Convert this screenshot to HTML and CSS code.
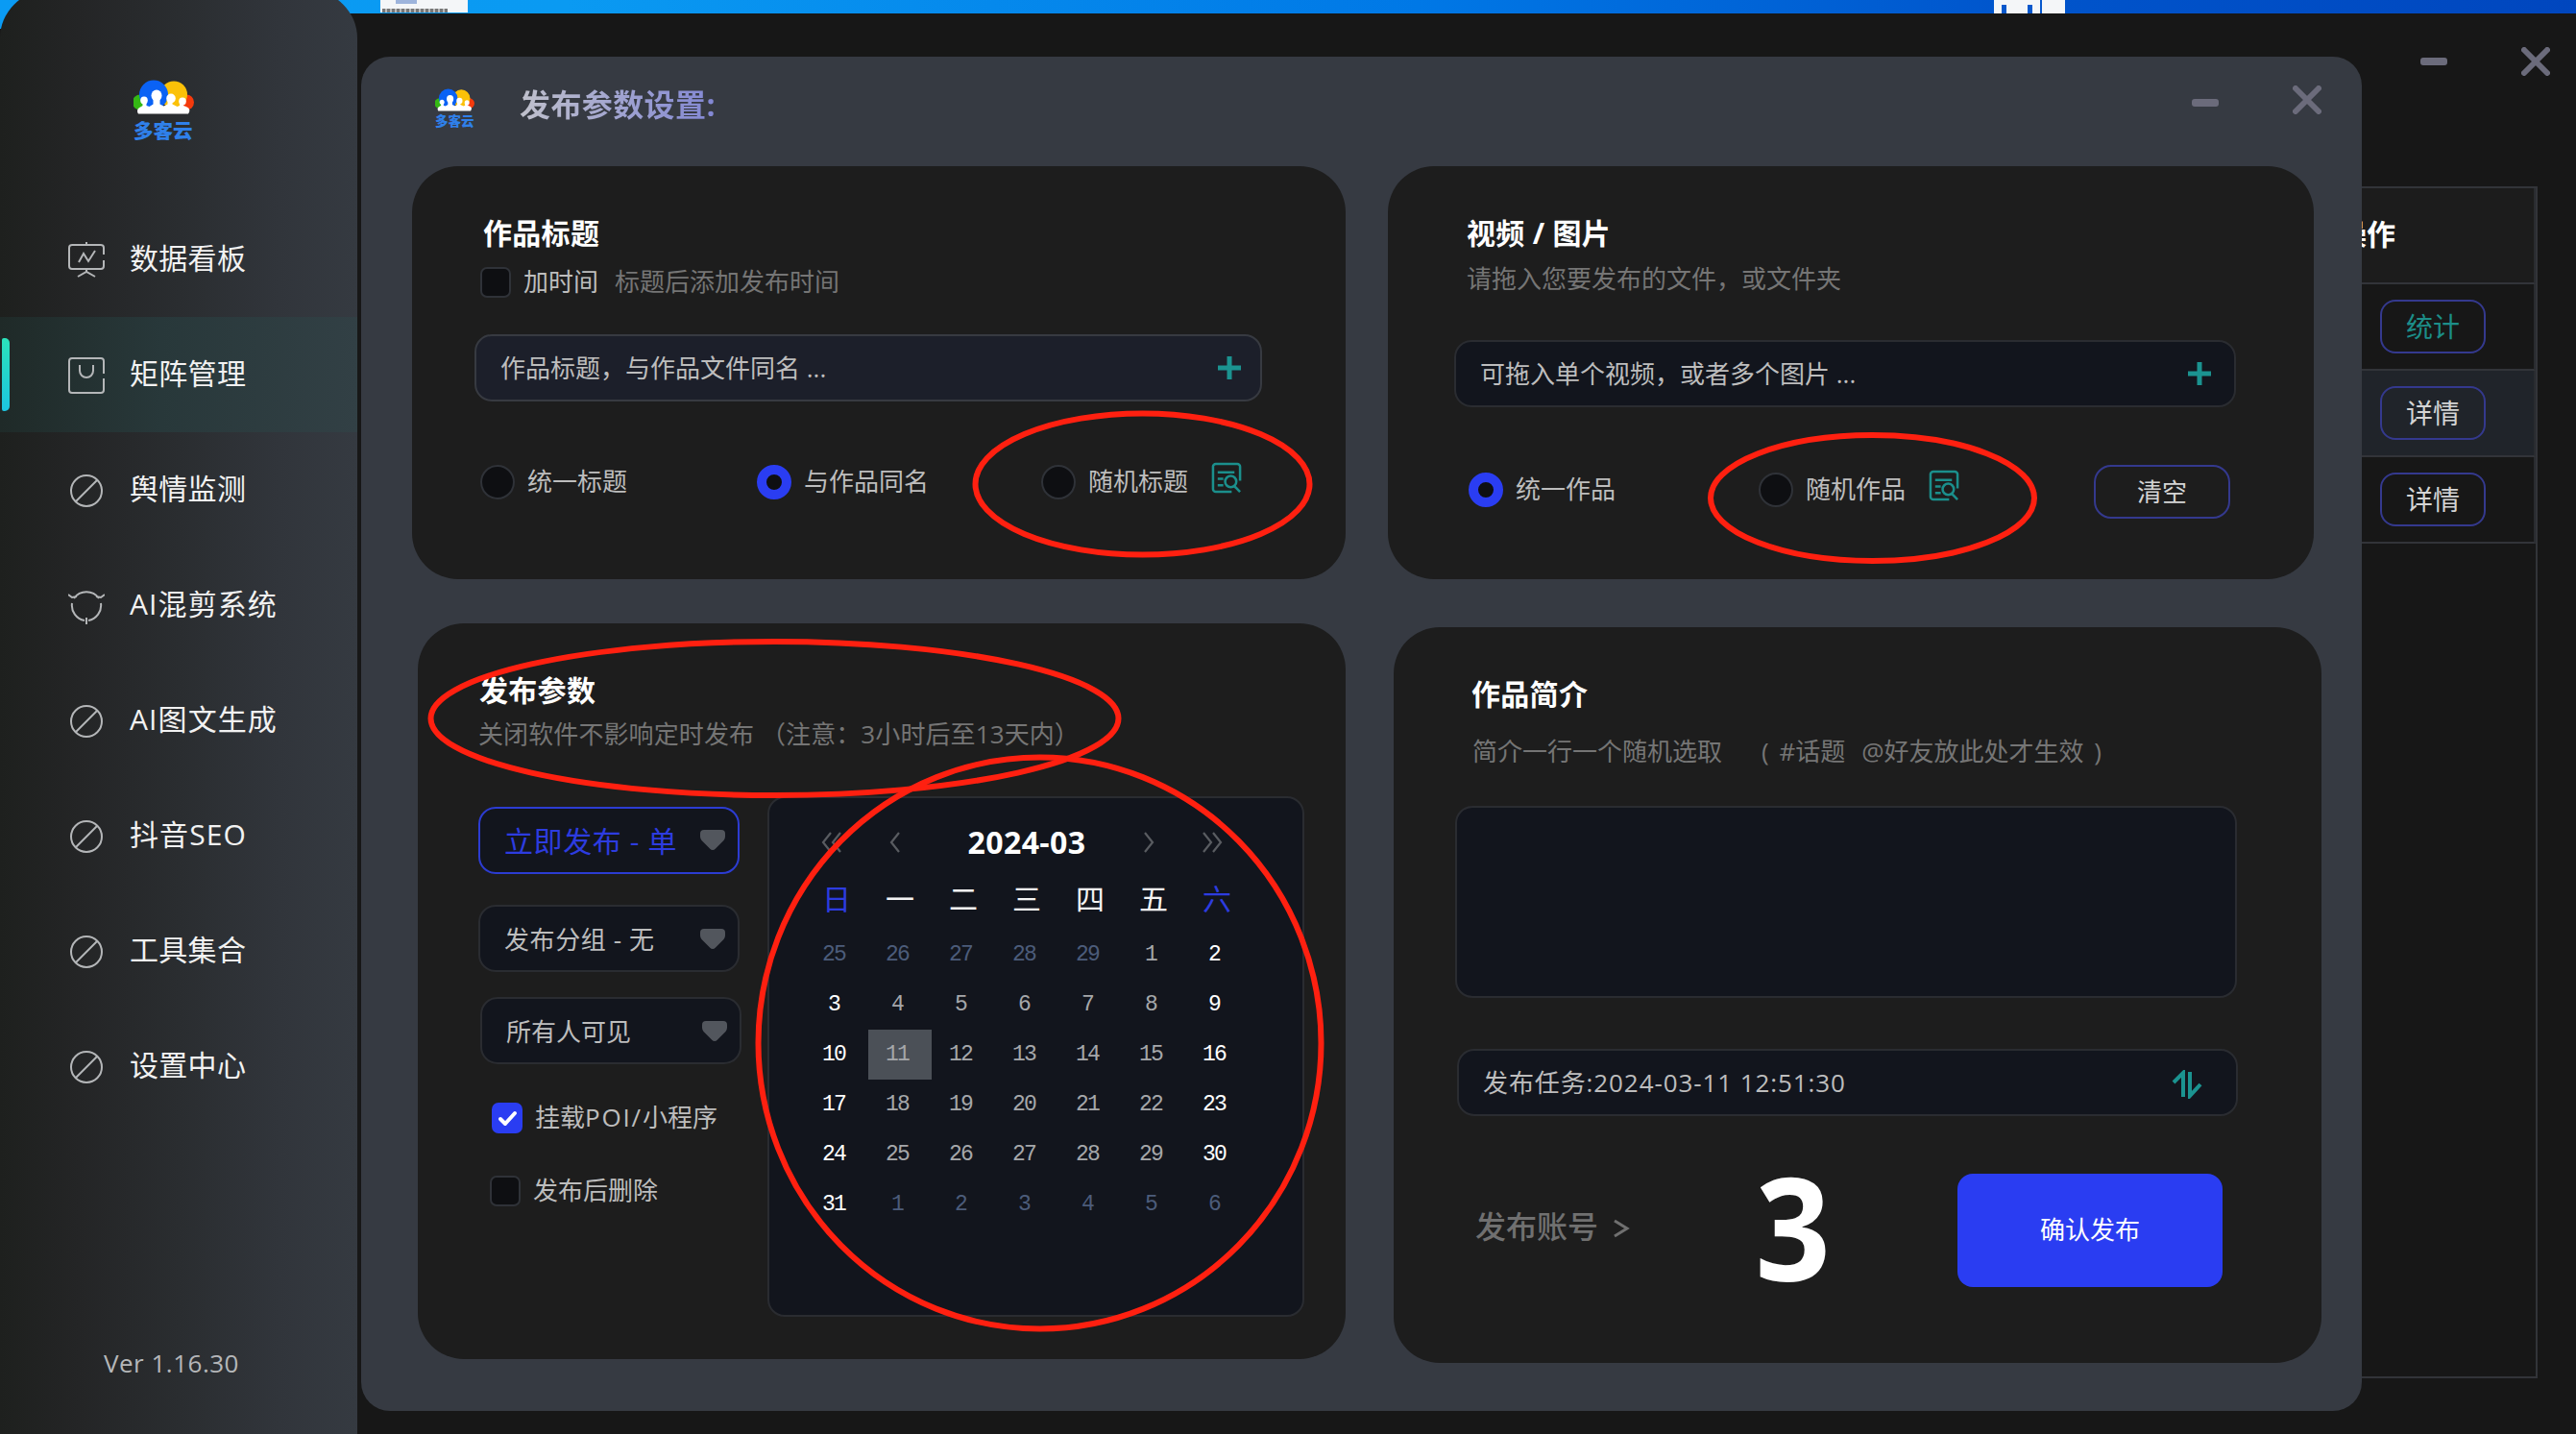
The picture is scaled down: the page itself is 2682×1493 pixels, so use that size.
FILE: index.html
```html
<!DOCTYPE html>
<html lang="zh-CN">
<head>
<meta charset="utf-8">
<title>多客云</title>
<link rel="stylesheet" href="styles.css">
</head>
<body>
<svg width="0" height="0" class="defs" aria-hidden="true">
  <symbol id="people" viewBox="0 0 63 35">
    <circle cx="7" cy="23" r="8" fill="#34b814"/>
    <circle cx="55" cy="23" r="8" fill="#f53a0c"/>
    <circle cx="42" cy="15" r="14" fill="#fbc108"/>
    <circle cx="21" cy="15" r="15" fill="#0a62f5"/>
    <g fill="#fff">
      <ellipse cx="11" cy="21" rx="3.800" ry="4"/><ellipse cx="24" cy="16" rx="5.500" ry="6"/><ellipse cx="39" cy="19" rx="4.800" ry="5"/><ellipse cx="51" cy="22" rx="3.800" ry="4"/>
      <path d="M5 35c-2-3-1-6 3-7.500l1.500-1v-4h4v4l3 1 4-2.500v-7h7v7l4 2 4-2v-5h5v5l5 2.500 2.500-1v-4h4v4c6 1.500 8 4.500 5 8.500z"/>
    </g>
  </symbol>
  <symbol id="ban" viewBox="0 0 38 38"><circle cx="19" cy="19" r="16"/><path d="M8 30L30 8"/></symbol>
  <symbol id="doc" viewBox="0 0 34 34">
    <path d="M31 20V5a3 3 0 0 0-3-3H5a3 3 0 0 0-3 3v24a3 3 0 0 0 3 3h17"/>
    <path d="M7 11h18M7 18h6M7 25h6"/><circle cx="21" cy="21" r="6"/><path d="M25 26l6 6"/>
  </symbol>
  <symbol id="plus" viewBox="0 0 26 26"><path d="M13 1v24M1 13h24"/></symbol>
  <symbol id="close" viewBox="0 0 30 30"><path d="M3 3l24 24M27 3L3 27"/></symbol>
  <symbol id="drop" viewBox="0 0 26 21"><path d="M4 0h18q4 0 4 4v3q0 2-1.500 4L16 19.500q-3 3-6 0L1.500 11Q0 9 0 7V4q0-4 4-4z"/></symbol>
</svg>

<div class="app">
  <span class="peek peek-a"><b></b><i></i></span>
  <span class="peek peek-b"><i></i><i></i><i></i></span>

  <aside class="sidebar">
    <div class="brand"><svg class="brand-art"><use href="#people"/></svg><span>多客云</span></div>
    <nav class="nav">
      <a class="nav-item"><svg class="ico" viewBox="0 0 38 38"><path d="M19 0v3M37 13V6a3 3 0 0 0-3-3H4a3 3 0 0 0-3 3v19a3 3 0 0 0 3 3h30a3 3 0 0 0 3-3v-6M11 21l5-9 5 8 7-11M19 28v3M10 36l9-5 9 5"/></svg>数据看板</a>
      <a class="nav-item active"><svg class="ico" viewBox="0 0 38 38"><path d="M37 17V4a3 3 0 0 0-3-3H4a3 3 0 0 0-3 3v30a3 3 0 0 0 3 3h30a3 3 0 0 0 3-3V22M12 8v6a7 7 0 0 0 14 0V8"/></svg>矩阵管理</a>
      <a class="nav-item"><svg class="ico"><use href="#ban"/></svg>舆情监测</a>
      <a class="nav-item latin"><svg class="ico" viewBox="0 0 38 38"><path d="M6 11a16 16 0 0 1 26 0M34 16a16 16 0 0 1-13 18M17 34A16 16 0 0 1 4 16M0 7l4 3 5-1M38 7l-4 3-5-1M19 31v7"/></svg>AI混剪系统</a>
      <a class="nav-item latin"><svg class="ico"><use href="#ban"/></svg>AI图文生成</a>
      <a class="nav-item latin"><svg class="ico"><use href="#ban"/></svg>抖音SEO</a>
      <a class="nav-item"><svg class="ico"><use href="#ban"/></svg>工具集合</a>
      <a class="nav-item"><svg class="ico"><use href="#ban"/></svg>设置中心</a>
    </nav>
    <div class="version">Ver 1.16.30</div>
  </aside>

  <main class="main">
    <div class="win-controls"><i class="min"></i><svg class="close"><use href="#close"/></svg></div>
    <div class="table">
      <div class="tr th"><span>操作</span></div>
      <div class="tr"><button class="pill teal">统计</button></div>
      <div class="tr hover"><button class="pill">详情</button></div>
      <div class="tr"><button class="pill">详情</button></div>
    </div>
  </main>

  <section class="dialog">
    <header class="dialog-head">
      <div class="brand small"><svg class="brand-art"><use href="#people"/></svg><span>多客云</span></div>
      <h1>发布参数设置:</h1>
      <div class="dialog-controls"><i class="min"></i><svg class="close"><use href="#close"/></svg></div>
    </header>
    <div class="columns">
      <div class="col">
        <article class="card card-title">
          <h2>作品标题</h2>
          <div class="check-row"><i class="box"></i><span>加时间</span><span class="muted">标题后添加发布时间</span></div>
          <div class="field lit"><span>作品标题，与作品文件同名 ...</span><svg class="plus"><use href="#plus"/></svg></div>
          <div class="radios">
            <label class="r1"><i class="radio"></i><span>统一标题</span></label>
            <label class="r2"><i class="radio on"></i><span>与作品同名</span></label>
            <label class="r3"><i class="radio"></i><span>随机标题</span><svg class="doc"><use href="#doc"/></svg></label>
          </div>
        </article>
        <article class="card card-params">
          <h2>发布参数</h2>
          <p class="muted">关闭软件不影响定时发布 （注意：3小时后至13天内）</p>
          <div class="params">
            <div class="options">
              <div class="select primary">立即发布 - 单<svg class="drop"><use href="#drop"/></svg></div>
              <div class="select group">发布分组 - 无<svg class="drop"><use href="#drop"/></svg></div>
              <div class="select who">所有人可见<svg class="drop"><use href="#drop"/></svg></div>
              <div class="opt poi"><i class="box on"><svg viewBox="0 0 32 32"><path d="M9 17l5 5 10-11"/></svg></i><span>挂载<em>POI/</em>小程序</span></div>
              <div class="opt del"><i class="box"></i><span>发布后删除</span></div>
            </div>
            <div class="calendar">
              <div class="cal-head">
                <svg viewBox="0 0 22 22"><path d="M10 1L2 11l8 10M20 1l-8 10 8 10"/></svg>
                <svg viewBox="0 0 22 22"><path d="M15 1L7 11l8 10"/></svg>
                <strong>2024-03</strong>
                <svg viewBox="0 0 22 22"><path d="M7 1l8 10-8 10"/></svg>
                <svg viewBox="0 0 22 22"><path d="M2 1l8 10-8 10M12 1l8 10-8 10"/></svg>
              </div>
              <div class="week"><b class="end">日</b><b>一</b><b>二</b><b>三</b><b>四</b><b>五</b><b class="end">六</b></div>
              <div class="days">
                <i class="off">25</i><i class="off">26</i><i class="off">27</i><i class="off">28</i><i class="off">29</i><i>1</i><i class="w">2</i>
                <i class="w">3</i><i>4</i><i>5</i><i>6</i><i>7</i><i>8</i><i class="w">9</i>
                <i class="w">10</i><i class="sel">11</i><i>12</i><i>13</i><i>14</i><i>15</i><i class="w">16</i>
                <i class="w">17</i><i>18</i><i>19</i><i>20</i><i>21</i><i>22</i><i class="w">23</i>
                <i class="w">24</i><i>25</i><i>26</i><i>27</i><i>28</i><i>29</i><i class="w">30</i>
                <i class="w">31</i><i class="off">1</i><i class="off">2</i><i class="off">3</i><i class="off">4</i><i class="off">5</i><i class="off">6</i>
              </div>
            </div>
          </div>
        </article>
      </div>
      <div class="col col-right">
        <article class="card card-media">
          <h2>视频 / 图片</h2>
          <p class="muted">请拖入您要发布的文件，或文件夹</p>
          <div class="field"><span>可拖入单个视频，或者多个图片 ...</span><svg class="plus"><use href="#plus"/></svg></div>
          <div class="radios">
            <label class="r1"><i class="radio on"></i><span>统一作品</span></label>
            <label class="r3"><i class="radio"></i><span>随机作品</span><svg class="doc"><use href="#doc"/></svg></label>
            <button class="pill clear">清空</button>
          </div>
        </article>
        <article class="card card-intro">
          <h2>作品简介</h2>
          <p class="muted"><span>简介一行一个随机选取</span><span class="tag">( #话题</span><span class="at">@好友放此处才生效 )</span></p>
          <div class="textarea"></div>
          <div class="field task"><span>发布任务:2024-03-11 12:51:30</span>
            <svg class="swap" viewBox="0 0 32 28"><path d="M2 12L12 2v25M19 1v25l11-12"/></svg></div>
          <div class="submit">
            <span class="accounts">发布账号 <svg viewBox="0 0 18 20"><path d="M2 2l13 8-13 8"/></svg></span>
            <strong class="count">3</strong>
            <button class="confirm">确认发布</button>
          </div>
        </article>
      </div>
    </div>
  </section>

  <svg class="marks" viewBox="0 0 2682 1493">
    <ellipse cx="1189.500" cy="504" rx="174" ry="73.500"/>
    <ellipse cx="1949.500" cy="518.500" rx="168.500" ry="65.500"/>
    <ellipse cx="806.500" cy="748" rx="358" ry="80"/>
    <ellipse cx="1082.500" cy="1086" rx="293" ry="297.500"/>
  </svg>
</div>
</body>
</html>
```

FILE: styles.css
```css
* { box-sizing: border-box; }
body {
  margin: 0;
  background: #171717;
  font-family: "Open Sans", "Noto Sans CJK SC", sans-serif;
  font-size: 26px;
  color: #bdbdbd;
}
h1, h2, p { margin: 0; }
i, b, em { font-style: normal; font-weight: 400; }
button { font: inherit; background: none; padding: 0; }
svg { fill: none; flex: none; display: block; }
.defs { position: absolute; }

.app {
  position: relative;
  display: flex;
  width: 2682px;
  height: 1493px;
  overflow: hidden;
  background:
    linear-gradient(90deg, #0a9bf4 0, #0a9af2 22%, #0078e6 55%, #0055cc 78%, #0046be 100%) 0 0 / 100% 14px no-repeat,
    linear-gradient(#0a9bf4, #0a9bf4) 0 0 / 24px 30px no-repeat,
    #171717;
}

/* corners of desktop windows showing above the app */
.peek { position: absolute; top: 0; height: 13px; background: #f4f6f8; }
.peek-a { left: 396px; width: 91px; }
.peek-a b { position: absolute; left: 16px; top: 0; width: 22px; height: 4px; background: #9db4dc; }
.peek-a i { position: absolute; left: 2px; top: 9px; width: 68px; height: 4px; background: repeating-linear-gradient(90deg, #777 0 3px, #bbb 3px 5px); }
.peek-b { left: 2076px; width: 74px; height: 14px; }
.peek-b i { position: absolute; bottom: 0; width: 5px; height: 9px; background: #0758cc; }
.peek-b i:nth-child(1) { left: 8px; }
.peek-b i:nth-child(2) { left: 35px; }
.peek-b i:nth-child(3) { left: 48px; width: 2px; height: 14px; }

/* sidebar */
.sidebar {
  position: relative;
  width: 372px;
  height: 1503px;
  margin-top: -10px;
  padding-top: 93px;
  border-radius: 50px 50px 0 0;
  background: linear-gradient(90deg, #1e201e 0, #242526 22%, #2a2d30 50%, #31353b 78%, #353a41 100%);
  display: flex;
  flex-direction: column;
}
.brand { width: 64px; margin-left: 139px; height: 127px; color: #2f80ea; font-weight: 900; font-size: 20.500px; line-height: 34px; white-space: nowrap; }
.brand-art { width: 63px; height: 36px; }
.nav-item {
  display: flex;
  align-items: center;
  height: 120px;
  padding: 0 0 6px 71px;
  gap: 26px;
  font-size: 30px;
  letter-spacing: 0.300px;
  color: #f2f2f2;
  position: relative;
}
.nav-item.latin { letter-spacing: 1.100px; }
.nav-item .ico { width: 38px; height: 38px; margin-top: 7px; stroke: #b4b6b8; stroke-width: 2; }
.nav-item.active { background: linear-gradient(90deg, #1f2a28, #28383a 45%, #324045); }
.nav-item.active::before {
  content: "";
  position: absolute;
  left: 2px;
  top: 22px;
  width: 8px;
  height: 76px;
  border-radius: 2px 5px 5px 2px;
  background: linear-gradient(#2be3bb, #1cc5e0);
}
.version { margin: 229px 0 0 108px; line-height: 40px; color: #b5b7b9; letter-spacing: 0.500px; }

/* main window */
.main { flex: 1; padding-top: 14px; display: flex; flex-direction: column; }
.win-controls, .dialog-controls { display: flex; align-items: center; justify-content: flex-end; }
.win-controls { height: 100px; padding: 0 27px 0 0; }
.min { width: 28px; height: 8px; border-radius: 3px; background: #6b6b7b; }
.dialog .min { margin-top: 5px; }
.close { width: 30px; height: 30px; margin-left: 77px; stroke: #6b6b7b; stroke-width: 6; stroke-linecap: round; }
.table { width: 2266px; height: 1241px; margin: 80px 0 0 4px; border: 2px solid #323439; border-left: 0; }
.tr { height: 90px; border-bottom: 2px solid #323439; border-right: 2px solid #2a2c30; padding-left: 2102px; display: flex; align-items: center; }
.tr.th { height: 100px; background: #1c1c1c; padding: 0 0 6px 2058px; font-weight: 700; font-size: 30px; color: #fff; }
.tr.hover { background: #20242a; }
.pill { width: 110px; height: 56px; border: 2px solid #34398e; border-radius: 16px; font-size: 28px; line-height: 48px; color: #d4d4d4; }
.pill.teal { color: #1c8e88; }

/* dialog */
.dialog {
  position: absolute;
  left: 376px;
  top: 59px;
  width: 2083px;
  height: 1410px;
  border-radius: 30px;
  background: #363a42;
}
.dialog-head { height: 114px; display: flex; align-items: flex-start; padding: 33px 42px 0 77px; }
.brand.small { margin: 0; width: 42px; height: 50px; font-size: 13.500px; line-height: 20px; }
.brand.small .brand-art { width: 41px; height: 24px; }
h1 {
  margin: -3px 0 0 46px;
  font-size: 32px;
  line-height: 40px;
  font-weight: 700;
  letter-spacing: 0.400px;
  background: linear-gradient(90deg, #c0c1cc, #8287d4);
  -webkit-background-clip: text;
  background-clip: text;
  color: transparent;
}
.dialog-controls { margin-left: auto; height: 30px; margin-top: -3px; }
.columns { display: flex; }
.col { width: 972px; margin-left: 53px; display: flex; flex-direction: column; align-items: flex-end; }
.col-right { width: 970px; margin-left: 44px; align-items: flex-start; }
.card { border-radius: 48px; background: #1d1d1d; padding-top: 50px; white-space: nowrap; }
.card-title { width: 972px; height: 430px; padding-left: 65px; }
.card-params { width: 966px; height: 766px; margin-top: 46px; padding-left: 63px; }
.card-media { width: 964px; height: 430px; padding-left: 69px; }
.card-intro { width: 966px; height: 766px; margin: 50px 0 0 6px; padding-left: 64px; }
h2 { font-size: 30px; line-height: 40px; color: #fff; font-weight: 700; letter-spacing: 0.300px; }
p { line-height: 36px; }
.muted { color: #757575; }

.box { width: 32px; height: 32px; border-radius: 7px; border: 2px solid #2f3238; background: #0e0f12; flex: none; }
.box.on { background: #2a3df2; border: 0; }
.box.on path { stroke: #fff; stroke-width: 4; stroke-linecap: round; stroke-linejoin: round; }
.radio { width: 36px; height: 36px; border-radius: 50%; border: 2px solid #2f3238; background: #0e0f12; }
.radio.on { border: 10px solid #2a3df2; }
.doc { width: 33px; height: 33px; stroke: #1b8f8c; stroke-width: 2.600; }
.plus { width: 26px; height: 26px; stroke: #1b9390; stroke-width: 5; }

.field {
  height: 70px;
  border: 2px solid #2a2c31;
  border-radius: 18px;
  background: #12151d;
  display: flex;
  align-items: center;
  justify-content: space-between;
  padding: 0 23px 0 25px;
}
.field.lit { background: #1c1f2a; border-color: #373a41; padding-right: 19px; }
.field span { line-height: 40px; }
.radios { display: flex; align-items: center; height: 36px; }
.radios label { display: flex; align-items: center; gap: 13px; line-height: 36px; }
.radios label span { margin-top: -3px; }

.card-title h2 { margin-left: 9px; }
.check-row { display: flex; align-items: center; height: 36px; margin-top: 13px; padding-left: 6px; }
.check-row span { margin: -3px 0 0 13px; line-height: 36px; }
.check-row .muted { margin-left: 17px; }
.card-title .field { width: 820px; margin-top: 36px; }
.card-title .radios { margin-top: 66px; padding-left: 6px; }
.card-title .r1 { width: 288px; }
.card-title .r2 { width: 296px; }
.r3 .doc { margin: -9px 0 0 11px; }

.card-media h2, .card-media p { margin-left: 13px; }
.card-media p { margin-top: 9px; }
.card-media .field { width: 814px; margin-top: 46px; }
.card-media .radios { height: 56px; margin-top: 58px; padding-left: 15px; }
.card-media .r1 { width: 302px; }
.clear { width: 142px; margin: 4px 0 0 139px; border-radius: 18px; font-size: 26px; line-height: 46px; }

.card-params h2 { margin-left: 1px; }
.card-params p { margin-top: 7px; letter-spacing: 0.100px; }
.params { display: flex; margin-top: 47px; }
.options { width: 301px; padding-top: 11px; }
.select {
  width: 272px;
  height: 70px;
  border: 2px solid #2a2c31;
  border-radius: 18px;
  background: #12151d;
  display: flex;
  align-items: center;
  justify-content: space-between;
  padding: 0 13px 0 25px;
  letter-spacing: 0.600px;
}
.select.primary { border-color: #2c3cd2; color: #2d3ce0; font-size: 30px; padding-bottom: 2px; }
.select.group { margin-top: 32px; }
.select.who { margin: 26px 0 0 2px; letter-spacing: 0; }
.drop { width: 26px; height: 21px; fill: #52565d; }
.opt { display: flex; align-items: center; height: 32px; gap: 13px; }
.opt span { margin-top: -5px; }
.opt em { letter-spacing: 1.800px; }
.poi { margin: 40px 0 0 14px; }
.del { margin: 44px 0 0 12px; }

.calendar { width: 559px; height: 542px; border: 2px solid #2a2c31; border-radius: 18px; background: #12151d; padding: 26px 0 0 37px; }
.cal-head, .week, .days { display: grid; grid-template-columns: repeat(7, 66px); }
.cal-head { height: 40px; align-items: center; }
.cal-head svg { width: 22px; height: 22px; margin-left: 17px; stroke: #595c61; stroke-width: 2.200; }
.cal-head strong { grid-column: span 3; text-align: center; font-size: 32px; line-height: 40px; letter-spacing: 0.400px; color: #fff; }
.week { height: 54px; margin: 13px 0 4px; line-height: 52px; text-align: center; font-size: 30px; color: #f4f4f4; }
.week .end { color: #2d3ce0; }
.days { grid-auto-rows: 52px; font: 23px/52px "Liberation Mono", monospace; letter-spacing: -1.800px; text-align: center; color: #a5a7aa; }
.days i { padding-right: 6px; }
.days .off { color: #4c5c7a; }
.days .w { color: #fff; }
.days .sel { background: #4b5057; }

.card-intro h2 { margin-left: 17px; }
.card-intro p { margin: 21px 0 0 18px; display: flex; }
.tag { margin-left: 41px; word-spacing: 4px; }
.at { margin-left: 17px; word-spacing: 4px; }
.textarea { width: 814px; height: 200px; margin-top: 39px; border: 2px solid #2a2c31; border-radius: 18px; background: #12151d; }
.task { width: 813px; margin: 53px 0 0 2px; padding-right: 35px; }
.task span { letter-spacing: 0.900px; }
.swap { width: 32px; height: 30px; stroke: #1b9390; stroke-width: 4; margin-top: 3px; }
.submit { display: flex; align-items: center; height: 118px; margin: 60px 0 0 21px; }
.accounts { display: flex; align-items: center; gap: 15px; width: 286px; font-size: 32px; font-weight: 500; color: #707070; padding-bottom: 13px; }
.accounts svg { width: 18px; height: 20px; stroke: #707070; stroke-width: 3; margin-top: 8px; }
.count { width: 216px; font-size: 149px; line-height: 110px; padding: 0 0 8px 6px; color: #fff; transform: scaleX(0.92); transform-origin: 0 0; }
.confirm { width: 276px; height: 118px; border: 0; border-radius: 16px; background: #2a3df2; color: #fff; padding-bottom: 4px; }

.marks { position: absolute; left: 0; top: 0; width: 2682px; height: 1493px; pointer-events: none; }
.marks ellipse { stroke: #ff2010; stroke-width: 6; }
```
